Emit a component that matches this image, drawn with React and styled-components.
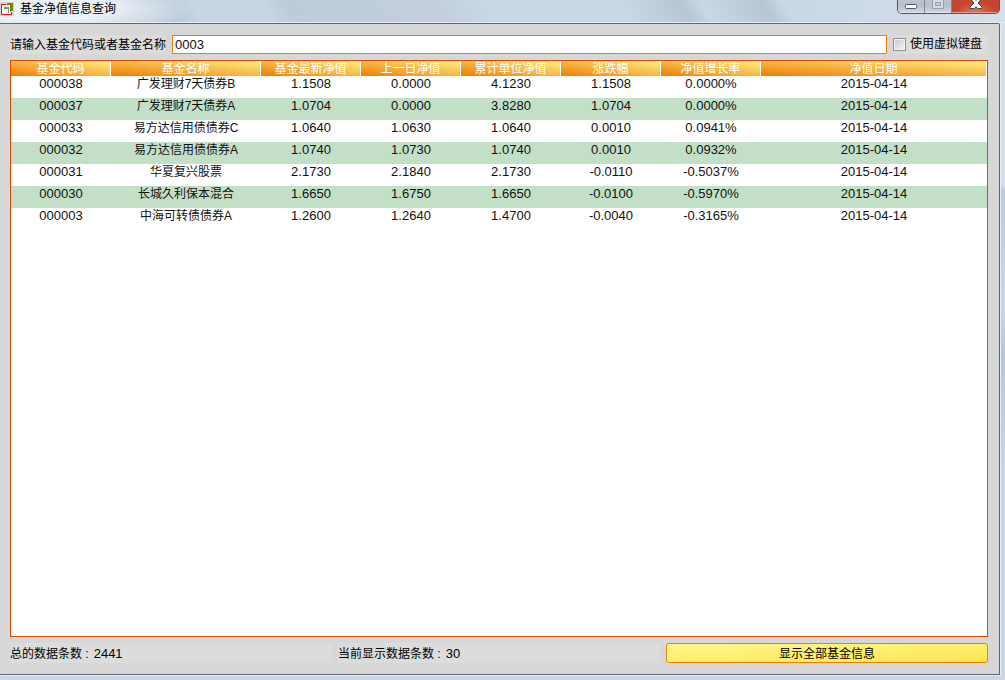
import React, { useState } from "react"
import styled, { createGlobalStyle } from "styled-components"

const GlobalStyle = createGlobalStyle`
  * {
    box-sizing: border-box;
  }
  body {
    margin: 0;
    color: #000;
    font-family: "Liberation Sans", "Noto Sans CJK SC", sans-serif;
    font-size: 12px;
  }
`

const Window = styled.div`
  display: flex;
  flex-direction: column;
  min-height: 100vh;
  background: linear-gradient(#d5e0ea 27%, #bccbdc 28%, #c9d8e6 45%, #b8c6d4 52%, #c9d8e6 70%);
`

// Glass frame: a soft glow behind the title, then diagonal streaks
const TitleBar = styled.header`
  display: flex;
  justify-content: space-between;
  height: 23px;
  padding-right: 5px;
  border-bottom: 1px solid #e6edf4;
  background:
    radial-gradient(ellipse 140px 30px at 50px 8px, #edf2f7 40%, transparent) no-repeat,
    linear-gradient(
      60deg,
      #c9d7e5 0%,
      #bccbdb 18%,
      #c8d6e3 20%,
      #c8d6e3 27%,
      #bdcbdb 29%,
      #c3cfdf 44%,
      #c9d8e6 49%,
      #c9d8e6 62%,
      #b8c6d4 68%,
      #c9d8e6 70%,
      #b8c6d4 76%,
      #c9d8e6 78%,
      #d5e0ea 100%
    );
`

const Title = styled.h1`
  display: flex;
  gap: 5px;
  margin: 0;
  font-size: 12px;
  font-weight: 400;
  line-height: 18px;
`

const WindowButtons = styled.div`
  display: flex;
  height: 14px;
  border: 1px solid #4e5661;
  border-top: 0;
  border-radius: 0 0 5px 5px;
  overflow: hidden;
`

const WindowButton = styled.button`
  display: flex;
  justify-content: center;
  width: ${({ $close }) => ($close ? 47 : 27)}px;
  padding: 0;
  border: 0;
  border-right: ${({ $close }) => ($close ? "0" : "1px solid #7d8996")};
  background: ${({ $close }) =>
    $close
      ? "radial-gradient(ellipse at 50% 100%, #e0785c, #c8452c 60%, #bb4a36)"
      : "linear-gradient(#bcc5cf, #b6c0cc 40%, #cfd8e1)"};
  box-shadow: inset 0 -1px 0 ${({ $close }) => ($close ? "#e3a093" : "#e2e8ee")};
`

const Panel = styled.main`
  flex: 1;
  display: flex;
  flex-direction: column;
  gap: 6px;
  margin: 0 5px 5px 0;
  padding: 11px 11px 11px 10px;
  border: 1px solid #62666c;
  border-left: 0;
  border-radius: 0 2px 0 0;
  background: #d7d7d7;
  box-shadow: 1px 1px 0 #e6edf4;
`

const SearchRow = styled.form`
  display: flex;
  gap: 6px;
  height: 19px;
  line-height: 21px;
`

const SearchLabel = styled.label`
  width: 156px;
  background: #dcdcdc;
  white-space: nowrap;
`

const SearchInput = styled.input`
  flex: 1;
  min-width: 0;
  padding: 0 2px;
  border: 1px solid #f08000;
  outline: 0;
  background: #fff;
  color: #111;
  font: 13px "Liberation Sans", sans-serif;
`

const KeyboardLabel = styled.label`
  display: flex;
  align-items: center;
  gap: 4px;
  width: 95px;
  background: #dcdcdc;
  white-space: nowrap;
`

const Checkbox = styled.input`
  appearance: none;
  width: 13px;
  height: 13px;
  margin: 0;
  border: 1px solid #8e8f8f;
  background: linear-gradient(135deg, #c0c6ce, #f6f6f6);
  box-shadow: inset 0 0 0 1px #f4f4f4;
  &:checked {
    background: #3c6ea5;
  }
`

const TableFrame = styled.section`
  flex: 1;
  border: 1px solid #d84a00;
  background: #fff;
`

const Table = styled.table`
  width: 100%;
  border-collapse: separate;
  border-spacing: 0;
  table-layout: fixed;
`

const Column = styled.col`
  width: ${({ $width }) => ($width ? `${$width}px` : "auto")};
`

const HeadCell = styled.th`
  height: 15px;
  padding: 2px 0 0;
  border-right: 1px solid #fff;
  background: linear-gradient(to top right, #f07c00, #f8b648 50%, #fff080);
  color: #fff;
  font-weight: 400;
  line-height: 13px;
`

const Row = styled.tr`
  height: 22px;
  &:nth-child(even) {
    background: #c3dfc8;
  }
`

const Cell = styled.td`
  padding: 0;
  color: #111;
  font-size: ${({ $name }) => ($name ? 12 : 13)}px;
  line-height: 16px;
  text-align: center;
  vertical-align: top;
`

const Footer = styled.footer`
  display: grid;
  grid-template-columns: repeat(3, 1fr);
  grid-template-rows: 20px;
  gap: 6px;
  line-height: 22px;
`

const Count = styled.p`
  display: flex;
  gap: 5px;
  margin: 0;
  background: #dcdcdc;
`

const CountValue = styled.span`
  font-size: 13px;
`

const ShowAllButton = styled.button`
  padding: 1px 0 0;
  border: 1px solid #f08000;
  border-radius: 3px;
  background: linear-gradient(to bottom right, #fff68c, #ffe650);
  color: #000;
  font: inherit;
  line-height: 18px;
`

const columns = [
  { title: "基金代码", width: 100 },
  { title: "基金名称", width: 150 },
  { title: "基金最新净值", width: 100 },
  { title: "上一日净值", width: 100 },
  { title: "累计单位净值", width: 100 },
  { title: "涨跌幅", width: 100 },
  { title: "净值增长率", width: 100 },
  { title: "净值日期" },
]

const funds = [
  ["000038", "广发理财7天债券B", "1.1508", "0.0000", "4.1230", "1.1508", "0.0000%", "2015-04-14"],
  ["000037", "广发理财7天债券A", "1.0704", "0.0000", "3.8280", "1.0704", "0.0000%", "2015-04-14"],
  ["000033", "易方达信用债债券C", "1.0640", "1.0630", "1.0640", "0.0010", "0.0941%", "2015-04-14"],
  ["000032", "易方达信用债债券A", "1.0740", "1.0730", "1.0740", "0.0010", "0.0932%", "2015-04-14"],
  ["000031", "华夏复兴股票", "2.1730", "2.1840", "2.1730", "-0.0110", "-0.5037%", "2015-04-14"],
  ["000030", "长城久利保本混合", "1.6650", "1.6750", "1.6650", "-0.0100", "-0.5970%", "2015-04-14"],
  ["000003", "中海可转债债券A", "1.2600", "1.2640", "1.4700", "-0.0040", "-0.3165%", "2015-04-14"],
]

const AppIcon = () => (
  <svg width="15" height="17" viewBox="0 0 15 17" shapeRendering="crispEdges" aria-hidden="true">
    <rect x="0" y="2" width="14" height="14" fill="#d9d4d2" />
    <rect x="2" y="5" width="10" height="9" fill="#fff" />
    <path d="M1 4h5v1H2v9h9v-2h1v3H1z" fill="#f01010" />
    <path d="M7 3h6v8h-2v1h-1V5H7z" fill="#808000" />
    <path d="M4 7h5v6H8V9H4z" fill="#8a8a8a" />
  </svg>
)

const App = () => {
  const [query, setQuery] = useState("0003")

  return (
    <Window>
      <GlobalStyle />
      <TitleBar>
        <Title>
          <AppIcon />
          基金净值信息查询
        </Title>
        <WindowButtons>
          <WindowButton aria-label="最小化">
            <svg width="14" height="13" viewBox="0 0 14 13">
              <rect x="1.5" y="4.5" width="11" height="4" rx="1" fill="#fff" stroke="#4c5562" />
            </svg>
          </WindowButton>
          <WindowButton aria-label="最大化">
            <svg width="14" height="13" viewBox="0 0 14 13">
              <path d="M1.5-1v9.500h11V-1" fill="#d7dde3" stroke="#96a0ac" />
              <rect x="4.500" y="2.500" width="5" height="3" fill="#c3cfdb" stroke="#96a0ac" />
            </svg>
          </WindowButton>
          <WindowButton $close aria-label="关闭">
            <svg width="14" height="13" viewBox="0 0 14 13">
              <path
                d="M1-2l4 5L1 7v1.500h4.500L7 6.500l1.500 2H13V7L9 3l4-5H9L7 .500 5-2z"
                fill="#fff"
                stroke="#4c4a58"
              />
            </svg>
          </WindowButton>
        </WindowButtons>
      </TitleBar>
      <Panel>
        <SearchRow onSubmit={e => e.preventDefault()}>
          <SearchLabel htmlFor="query">请输入基金代码或者基金名称</SearchLabel>
          <SearchInput id="query" value={query} onChange={e => setQuery(e.target.value)} />
          <KeyboardLabel>
            <Checkbox type="checkbox" />
            使用虚拟键盘
          </KeyboardLabel>
        </SearchRow>
        <TableFrame>
          <Table>
            <colgroup>
              {columns.map(({ title, width }) => (
                <Column key={title} $width={width} />
              ))}
            </colgroup>
            <thead>
              <tr>
                {columns.map(({ title }) => (
                  <HeadCell key={title}>{title}</HeadCell>
                ))}
              </tr>
            </thead>
            <tbody>
              {funds.map(fund => (
                <Row key={fund[0]}>
                  {fund.map((value, i) => (
                    <Cell key={columns[i].title} $name={i === 1}>
                      {value}
                    </Cell>
                  ))}
                </Row>
              ))}
            </tbody>
          </Table>
        </TableFrame>
        <Footer>
          <Count>
            总的数据条数 : <CountValue>2441</CountValue>
          </Count>
          <Count>
            当前显示数据条数 : <CountValue>30</CountValue>
          </Count>
          <ShowAllButton type="button">显示全部基金信息</ShowAllButton>
        </Footer>
      </Panel>
    </Window>
  )
}

export default App
